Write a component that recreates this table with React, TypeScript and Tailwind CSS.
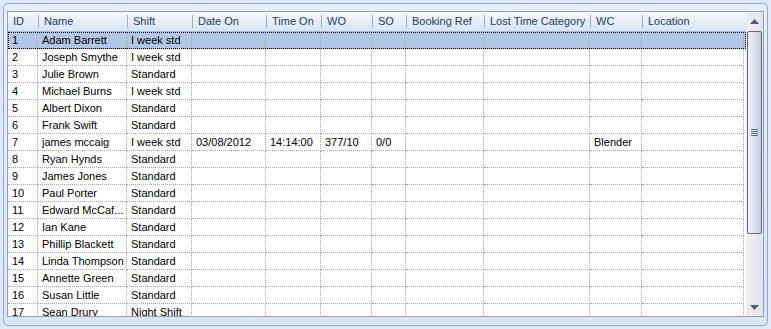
const cols = [
  { key: "id", label: "ID", w: 30 },
  { key: "name", label: "Name", w: 89 },
  { key: "shift", label: "Shift", w: 65 },
  { key: "dateOn", label: "Date On", w: 74 },
  { key: "timeOn", label: "Time On", w: 55 },
  { key: "wo", label: "WO", w: 51 },
  { key: "so", label: "SO", w: 34 },
  { key: "booking", label: "Booking Ref", w: 78 },
  { key: "lost", label: "Lost Time Category", w: 106 },
  { key: "wc", label: "WC", w: 52 },
  { key: "location", label: "Location", w: 102 },
];

type Row = Record<string, string>;

const rows: Row[] = [
  { id: "1", name: "Adam Barrett", shift: "I week std" },
  { id: "2", name: "Joseph Smythe", shift: "I week std" },
  { id: "3", name: "Julie Brown", shift: "Standard" },
  { id: "4", name: "Michael Burns", shift: "I week std" },
  { id: "5", name: "Albert Dixon", shift: "Standard" },
  { id: "6", name: "Frank Swift", shift: "Standard" },
  {
    id: "7",
    name: "james mccaig",
    shift: "I week std",
    dateOn: "03/08/2012",
    timeOn: "14:14:00",
    wo: "377/10",
    so: "0/0",
    wc: "Blender",
  },
  { id: "8", name: "Ryan Hynds", shift: "Standard" },
  { id: "9", name: "James Jones", shift: "Standard" },
  { id: "10", name: "Paul Porter", shift: "Standard" },
  { id: "11", name: "Edward McCaf...", shift: "Standard" },
  { id: "12", name: "Ian Kane", shift: "Standard" },
  { id: "13", name: "Phillip Blackett", shift: "Standard" },
  { id: "14", name: "Linda Thompson", shift: "Standard" },
  { id: "15", name: "Annette Green", shift: "Standard" },
  { id: "16", name: "Susan Little", shift: "Standard" },
  { id: "17", name: "Sean Drury", shift: "Night Shift" },
];

function ScrollBar() {
  return (
    <div className="flex w-[17px] shrink-0 flex-col items-center bg-gradient-to-r from-[#eeeff2] to-[#e2e4ea]">
      {/* arrow up */}
      <div className="flex h-[19px] w-full items-center justify-center">
        <svg width="9" height="5" viewBox="0 0 9 5">
          <path d="M0 5 L4.5 0 L9 5 Z" fill="#4d5b76" />
        </svg>
      </div>
      {/* thumb */}
      <div className="flex h-[203px] w-[15px] items-center justify-center rounded-[2px] border border-[#5d6b88] bg-gradient-to-r from-[#eef1f7] via-[#dde3ee] to-[#c3cbdb]">
        <div className="flex flex-col gap-[1px]">
          <div className="h-[1px] w-[7px] bg-[#5d6b88]" />
          <div className="h-[1px] w-[7px] bg-[#5d6b88]" />
          <div className="h-[1px] w-[7px] bg-[#5d6b88]" />
          <div className="h-[1px] w-[7px] bg-[#5d6b88]" />
        </div>
      </div>
      <div className="flex-1" />
      {/* arrow down */}
      <div className="flex h-[18px] w-full items-center justify-center">
        <svg width="9" height="5" viewBox="0 0 9 5">
          <path d="M0 0 L9 0 L4.5 5 Z" fill="#4d5b76" />
        </svg>
      </div>
    </div>
  );
}

export default function App() {
  return (
    <div
      className="h-[329px] w-[771px] bg-[#dfe8f6] p-[3px] text-[11px] text-black"
      style={{ fontFamily: '"Liberation Sans", Arial, sans-serif' }}
    >
      <div className="h-[323px] w-[765px] rounded-[5px] border border-[#8fa8cb] bg-gradient-to-b from-[#e7eefa] to-[#dbe5f4] pl-[3px] pr-[4px] pt-[7px] pb-[8px]">
        <div className="flex h-[306px] w-[757px] border border-[#8ba1c4] bg-white p-0">
          {/* table area */}
          <div className="flex w-[738px] flex-col overflow-hidden">
            {/* header */}
            <div className="flex h-[20px] shrink-0 border-b border-[#a4bad6] bg-gradient-to-b from-[#f5f8fd] to-[#d9e4f3] text-[#1e3b63]">
              {cols.map((c, i) => (
                <div
                  key={c.key}
                  className="flex shrink-0 items-center"
                  style={{ width: c.w }}
                >
                  {i > 0 && <div className="h-[13px] w-[1px] bg-[#97aed0]" />}
                  <span className="pl-[5px]">{c.label}</span>
                </div>
              ))}
            </div>
            {/* rows */}
            <div className="flex flex-1 flex-col overflow-hidden">
              {rows.map((r, ri) => (
                <div
                  key={r.id}
                  className={
                    "relative flex h-[17px] shrink-0 " +
                    (ri === 0 ? "bg-[#b2c7e8]" : "bg-white")
                  }
                >
                  {cols.map((c) => (
                    <div
                      key={c.key}
                      className="flex shrink-0 items-center overflow-hidden whitespace-nowrap border-b border-r border-dotted border-[#a5a5a5] pl-[4px] leading-[16px]"
                      style={{ width: c.w }}
                    >
                      {r[c.key] ?? ""}
                    </div>
                  ))}
                  {ri === 0 && (
                    <div className="pointer-events-none absolute inset-0 border border-dotted border-black" />
                  )}
                </div>
              ))}
            </div>
          </div>
          <ScrollBar />
        </div>
      </div>
    </div>
  );
}
